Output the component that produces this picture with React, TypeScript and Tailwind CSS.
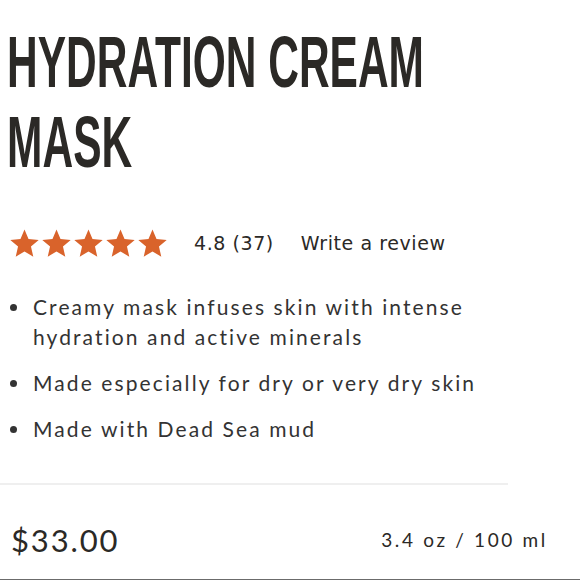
const bullets = [
  'Creamy mask infuses skin with intense hydration and active minerals',
  'Made especially for dry or very dry skin',
  'Made with Dead Sea mud',
];

function Stars() {
  return (
    <div className="flex items-center gap-[1px]">
      {[0, 1, 2, 3, 4].map((i) => (
        <svg key={i} viewBox="0 0 24 24" className="w-[31px] h-[31px]">
          <path
            d="M12 1.2l3.1 7.3 7.9.7-6 5.2 1.8 7.8L12 18.1 5.2 22.2 7 14.4 1 9.2l7.9-.7z"
            fill="#d9632b"
          />
        </svg>
      ))}
    </div>
  );
}

export default function App() {
  return (
    <div className="w-[580px] h-[580px] bg-white overflow-hidden flex flex-col border-b border-[#6b6b6b]">
      {/* Title */}
      <h1 className="pl-[12px] pt-[22px] text-[#2b2926] font-bold uppercase whitespace-nowrap text-[72px] leading-[80px] origin-left scale-x-[0.59] font-[family-name:Liberation_Sans_Narrow,Liberation_Sans,sans-serif]">
        Hydration Cream
        <br />
        Mask
      </h1>

      {/* Rating */}
      <div className="flex items-center pl-[9px] mt-[46px] text-[19px] tracking-[0.03em] text-[#2b2926] font-[family-name:DejaVu_Sans,sans-serif]">
        <Stars />
        <span className="ml-[26px]">4.8 (37)</span>
        <span className="ml-[27px]">Write a review</span>
      </div>

      {/* Bullets */}
      <ul className="mt-[33px] pl-[10px] pr-[20px] space-y-[16px] text-[21px] leading-[30px] tracking-[0.1em] text-[#333] font-[family-name:Lato,sans-serif]">
        {bullets.map((b) => (
          <li key={b} className="flex">
            <span className="mt-[12px] w-[7px] h-[7px] rounded-full bg-[#333] shrink-0" />
            <span className="ml-[16px] w-[450px]">{b}</span>
          </li>
        ))}
      </ul>

      {/* Price row */}
      <div className="mt-auto">
        <div className="w-[508px] h-[2px] bg-[#efefef]" />
        <div className="flex items-center justify-between pl-[11px] pr-[32px] pt-[16px] h-[94px] text-[#2b2926] font-[family-name:Lato,sans-serif]">
          <span className="text-[31px] tracking-[0.06em]">$33.00</span>
          <span className="text-[19px] tracking-[0.14em]">3.4 oz / 100 ml</span>
        </div>
      </div>
    </div>
  );
}
